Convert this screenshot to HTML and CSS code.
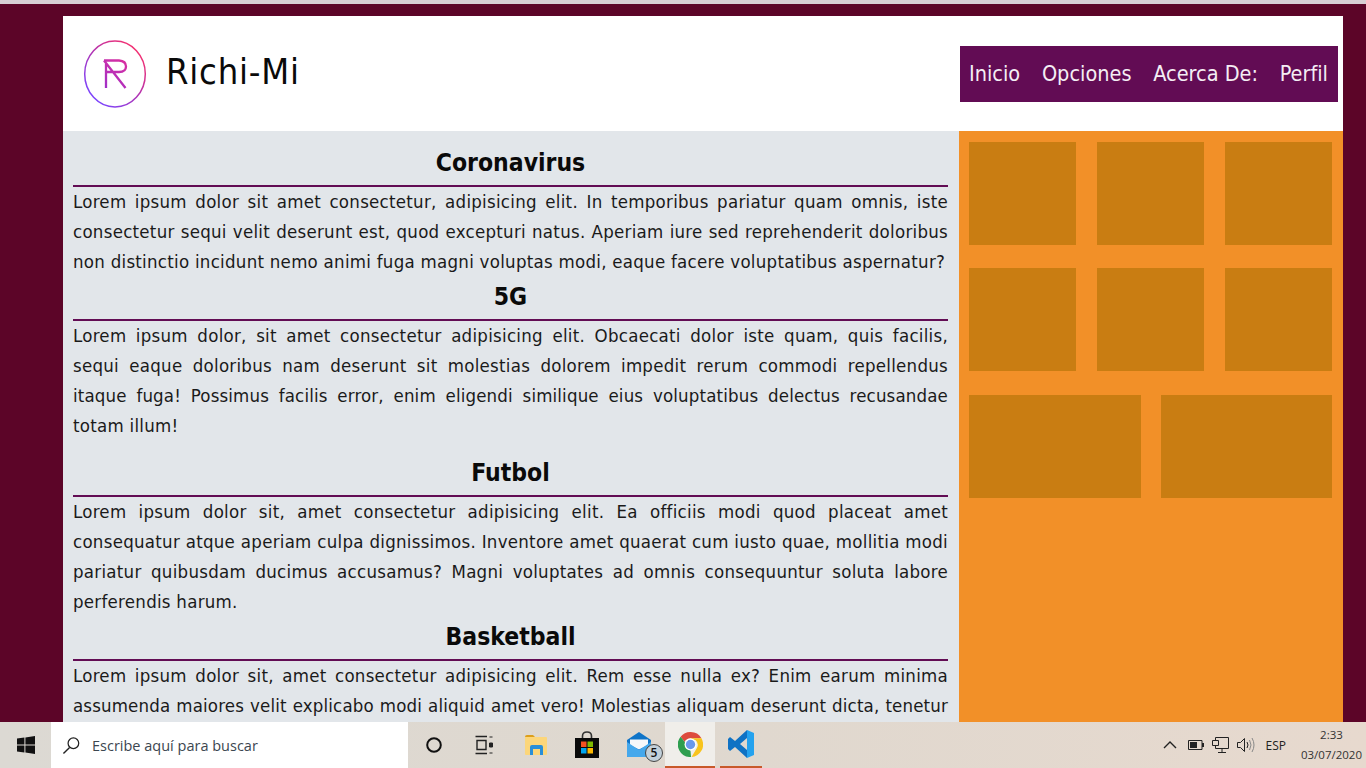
FILE: index.html
```html
<!DOCTYPE html>
<html lang="es">
<head>
<meta charset="utf-8">
<title>Richi-Mi</title>
<link rel="stylesheet" href="styles.css">
</head>
<body>
<div class="viewport">
  <div class="page">
    <header class="site-header">
      <div class="brand">
        <svg class="logo" viewBox="0 0 64 70" width="64" height="70" aria-hidden="true">
          <defs>
            <linearGradient id="lg" x1="0.85" y1="0.1" x2="0.15" y2="0.9">
              <stop offset="0" stop-color="#f5306f"/>
              <stop offset="0.5" stop-color="#b035b5"/>
              <stop offset="1" stop-color="#7a45ff"/>
            </linearGradient>
            <linearGradient id="lr" gradientUnits="userSpaceOnUse" x1="42" y1="21" x2="22" y2="49">
              <stop offset="0" stop-color="#d92fa0"/>
              <stop offset="1" stop-color="#a02fc8"/>
            </linearGradient>
          </defs>
          <ellipse cx="32" cy="35" rx="30.3" ry="33" fill="none" stroke="url(#lg)" stroke-width="1.5"/>
          <path d="M21 21.500H36Q43 22 43 27.500T36 33H24M23 25V49M21 21.500 42.500 49" fill="none" stroke="url(#lr)" stroke-width="2.300"/>
        </svg>
        <span class="brand-name">Richi-Mi</span>
      </div>
      <nav class="nav">
        <a>Inicio</a>
        <a>Opciones</a>
        <a>Acerca De:</a>
        <a>Perfil</a>
      </nav>
    </header>
    <div class="content">
      <main class="articles">
        <h2>Coronavirus</h2>
        <p>Lorem ipsum dolor sit amet consectetur, adipisicing elit. In temporibus pariatur quam omnis, iste consectetur sequi velit deserunt est, quod excepturi natus. Aperiam iure sed reprehenderit doloribus non distinctio incidunt nemo animi fuga magni voluptas modi, eaque facere voluptatibus aspernatur?</p>
        <h2>5G</h2>
        <p>
          <span class="line">Lorem ipsum dolor, sit amet consectetur adipisicing elit. Obcaecati dolor iste quam, quis facilis,</span>
          <span class="line">sequi eaque doloribus nam deserunt sit molestias dolorem impedit rerum commodi repellendus</span>
          <span class="line tight">itaque fuga! Possimus facilis error, enim eligendi similique eius voluptatibus delectus recusandae</span>
          totam illum!
        </p>
        <h2 class="spaced">Futbol</h2>
        <p>Lorem ipsum dolor sit, amet consectetur adipisicing elit. Ea officiis modi quod placeat amet consequatur atque aperiam culpa dignissimos. Inventore amet quaerat cum iusto quae, mollitia modi pariatur quibusdam ducimus accusamus? Magni voluptates ad omnis consequuntur soluta labore perferendis harum.</p>
        <h2>Basketball</h2>
        <p>
          <span class="line">Lorem ipsum dolor sit, amet consectetur adipisicing elit. Rem esse nulla ex? Enim earum minima</span>
          <span class="line tight">assumenda maiores velit explicabo modi aliquid amet vero! Molestias aliquam deserunt dicta, tenetur</span>
        </p>
      </main>
      <aside class="sidebar">
        <div class="tiles three"><div></div><div></div><div></div></div>
        <div class="tiles three"><div></div><div></div><div></div></div>
        <div class="tiles two"><div></div><div></div></div>
      </aside>
    </div>
  </div>
</div>
<footer class="taskbar">
  <div class="start">
    <svg viewBox="0 0 18 18" width="18" height="18" aria-hidden="true"><path fill="#111" d="M0 2.600 7.400 1.600V8.400H0ZM8.400 1.400 18 0V8.400H8.400ZM0 9.500H7.400V16.400L0 15.400ZM8.400 9.500H18V18L8.400 16.600Z"/></svg>
  </div>
  <div class="search">
    <svg viewBox="0 0 20 20" width="19" height="19" aria-hidden="true"><circle cx="12" cy="7.600" r="5.600" fill="none" stroke="#222" stroke-width="1.300"/><path d="M8 12 1.500 18.500" stroke="#222" stroke-width="1.500"/></svg>
    <span>Escribe aquí para buscar</span>
  </div>
  <div class="task-icons">
    <div class="cell cortana"><svg viewBox="0 0 18 18" width="18" height="18" aria-hidden="true"><circle cx="9" cy="9" r="6.800" fill="none" stroke="#111" stroke-width="2"/></svg></div>
    <div class="cell views"><svg viewBox="0 0 20 20" width="20" height="20" aria-hidden="true"><path d="M1.500 1.500H13M1.500 18.500H13M3 5.500H12V14.500H3Z" fill="none" stroke="#222" stroke-width="1.400"/><path d="M15.500 2H18.500M15.500 18H18.500M15.500 8H18.500V12H15.500Z" fill="#222" stroke="#222"/></svg></div>
    <div class="cell explorer"><svg viewBox="0 0 24 22" width="24" height="22" aria-hidden="true"><path d="M1 3Q1 1 3 1H9L11 3H1Z" fill="#dc9f1c"/><path d="M1 3H22Q23 3 23 4V20Q23 21 22 21H2Q1 21 1 20Z" fill="#fcd67a"/><path d="M6 21V13Q6 11 8 11H17Q19 11 19 13V21H16V15H9V21Z" fill="#2a8fd8"/></svg></div>
    <div class="cell store"><svg viewBox="0 0 24 28" width="24" height="28" aria-hidden="true"><path d="M7.500 9V5Q7.500 1 12 1T16.500 5V9" fill="none" stroke="#333" stroke-width="1.600"/><path d="M0 7H24V27H0Z" fill="#0a0a0a"/><path d="M6 10.500H11.500V16H6Z" fill="#f25022"/><path d="M12.500 10.500H18V16H12.500Z" fill="#7fba00"/><path d="M6 17H11.500V22.500H6Z" fill="#00a4ef"/><path d="M12.500 17H18V22.500H12.500Z" fill="#ffb900"/></svg></div>
    <div class="cell mail">
      <svg viewBox="0 0 26 26" width="26" height="26" aria-hidden="true"><path d="M13 0 25 8V24Q25 25 24 25H2Q1 25 1 24V8Z" fill="#0f74c8"/><path d="M4 7.500H22V13L13 17.500 4 13Z" fill="#f6f8fa"/><path d="M1 10 13 18 25 10V24Q25 25 24 25H2Q1 25 1 24Z" fill="#45a8ec"/></svg>
      <span class="badge">5</span>
    </div>
    <div class="cell chrome active"><svg viewBox="0 0 48 48" width="25" height="25" aria-hidden="true"><path d="M24 0A24 24 0 0 1 45 12H24A12 12 0 0 0 13 19L5 9A24 24 0 0 1 24 0Z" fill="#dd4b3e"/><path d="M45 12A24 24 0 0 1 26 48L36 31A12 12 0 0 0 34 16L24 12Z" fill="#f8c41d"/><path d="M5 9 13 19 24 36 25 48A24 24 0 0 1 5 9Z" fill="#2f9e4f"/><circle cx="24" cy="24" r="11.500" fill="#fff"/><circle cx="24" cy="24" r="9" fill="#6a98ee"/></svg></div>
    <div class="cell vscode open"><svg viewBox="0 0 26 28" width="26" height="28" aria-hidden="true"><path d="M19 0 7 11 2 7 0 9V19L2 21 7 17 19 28V20L12 14 19 8Z" fill="#0f72c4"/><path d="M19 0 26 3V25L19 28Z" fill="#24a2ee"/></svg></div>
  </div>
  <div class="tray">
    <svg class="tray-icon chevron" viewBox="0 0 14 8" width="14" height="8" aria-hidden="true"><path d="M1 7 7 1 13 7" fill="none" stroke="#222" stroke-width="1.400"/></svg>
    <svg class="tray-icon" viewBox="0 0 16 10" width="16" height="10" aria-hidden="true"><path d="M.5.500H14V9.500H.5Z" fill="none" stroke="#222"/><path d="M2 2H9V8H2ZM14 3H16V7H14Z" fill="#222"/></svg>
    <svg class="tray-icon" viewBox="0 0 17 16" width="17" height="16" aria-hidden="true"><path d="M3.500 3.500V.5H16.500V11.500H3.500V8M.5 3.500H6.500V8.500H.5ZM10 11.500V15M6 15.500H14" fill="none" stroke="#222"/></svg>
    <svg class="tray-icon" viewBox="0 0 18 16" width="18" height="16" aria-hidden="true"><path d="M.5 5.500H3.500L7.500 1.500V14.500L3.500 10.500H.5Z" fill="none" stroke="#222"/><path d="M10 5Q12 8 10 11" fill="none" stroke="#222"/><path d="M12.500 3Q15.500 8 12.500 13M15 1Q19 8 15 15" fill="none" stroke="#888"/></svg>
    <span class="lang">ESP</span>
    <div class="clock"><span>2:33</span><span>03/07/2020</span></div>
  </div>
</footer>
</body>
</html>
```
FILE: styles.css
```css
* { box-sizing: border-box; }
html, body { height: 100%; }
body {
  margin: 0;
  height: 768px;
  overflow: hidden;
  display: flex;
  flex-direction: column;
  background: #5c0528;
  font-family: "DejaVu Sans Condensed", "DejaVu Sans", sans-serif;
  font-stretch: condensed;
  color: #111;
}
.viewport {
  flex: 1;
  min-height: 0;
  overflow: hidden;
  border-top: 4px solid #d8cfd4;
  padding: 12px 23px 0 63px;
}
.page { width: 1280px; }
.site-header {
  height: 115px;
  background: #fff;
  display: flex;
  align-items: center;
  justify-content: space-between;
  padding: 0 5px 0 20px;
}
.brand { display: flex; align-items: center; gap: 19px; }
.logo { margin-top: 1px; flex: none; }
.brand-name {
  font-size: 36px;
  line-height: 40px;
  letter-spacing: 0.8px;
  color: #0a0a0a;
  margin-top: -4px;
}
.nav {
  width: 378px;
  height: 56px;
  margin-top: 1px;
  background: #620c54;
  display: flex;
  align-items: center;
  justify-content: space-between;
  padding: 0 10px 2px 9px;
}
.nav a { color: #f4eef4; font-size: 21.500px; }
.content { display: flex; height: 600px; }
.articles {
  width: 896px;
  background: #e2e6ea;
  padding: 16px 11px 0 10px;
}
.articles h2 {
  margin: 4px 0 0;
  box-sizing: content-box;
  height: 32px;
  padding-bottom: 6px;
  border-bottom: 2px solid #620c54;
  font-size: 24.500px;
  line-height: 32px;
  font-weight: bold;
  text-align: center;
  color: #0a0a0a;
}
.articles h2:first-child { margin-top: 0; }
.articles h2.spaced { margin-top: 16px; }
.articles p {
  margin: 0;
  font-size: 18.500px;
  letter-spacing: 0.27px;
  line-height: 30px;
  text-align: justify;
  color: #1a1a1a;
}
.line { display: block; text-align-last: justify; }
.line.tight { letter-spacing: 0.16px; }
.sidebar {
  width: 384px;
  background: #f29028;
  padding: 11px 10px 0;
  display: flex;
  flex-direction: column;
  gap: 23px;
}
.tiles { display: grid; height: 103px; }
.tiles.three { grid-template-columns: 107px 107px 107px; column-gap: 21px; }
.tiles.two { grid-template-columns: 172px 171px; column-gap: 20px; margin-top: 1px; }
.tiles div { background: #c97d12; }
.taskbar {
  flex: none;
  height: 46px;
  display: flex;
  align-items: stretch;
  background: linear-gradient(90deg, #dcd9d3 0%, #dfd8cf 50%, #e7d9ce 100%);
  font-family: "Open Sans", sans-serif;
  font-stretch: normal;
  color: #222;
}
.start { width: 51px; display: flex; align-items: center; justify-content: center; }
.search {
  width: 357px;
  background: #fff;
  display: flex;
  align-items: center;
  gap: 11px;
  padding-left: 11px;
  font-size: 14.500px;
  color: #3c4650;
}
.task-icons { display: flex; }
.cell { display: flex; align-items: center; justify-content: center; position: relative; height: 46px; }
.cortana { width: 51px; }
.views { width: 50px; }
.explorer { width: 53px; }
.store { width: 50px; }
.mail { width: 53px; }
.chrome { width: 50px; }
.active { background: #f0eeea; border-bottom: 2px solid #c8592a; }
.vscode { width: 42px; margin-left: 5px; }
.open { border-bottom: 2px solid #c8592a; }
.badge {
  position: absolute;
  right: 2px;
  bottom: 6px;
  width: 18px;
  height: 18px;
  border-radius: 50%;
  background: #c2d0da;
  border: 1.500px solid #444;
  font-size: 12px;
  font-weight: 600;
  line-height: 15px;
  text-align: center;
  color: #111;
}
.tray {
  margin-left: auto;
  display: flex;
  align-items: center;
  padding-right: 4px;
}
.tray-icon { margin-right: 8px; flex: none; }
.chevron { margin-right: 11px; }
.lang { font-size: 12px; margin: 0 15px 0 2px; }
.clock {
  display: flex;
  flex-direction: column;
  align-items: center;
  font-size: 11.500px;
  line-height: 20px;
  color: #333;
}
```
